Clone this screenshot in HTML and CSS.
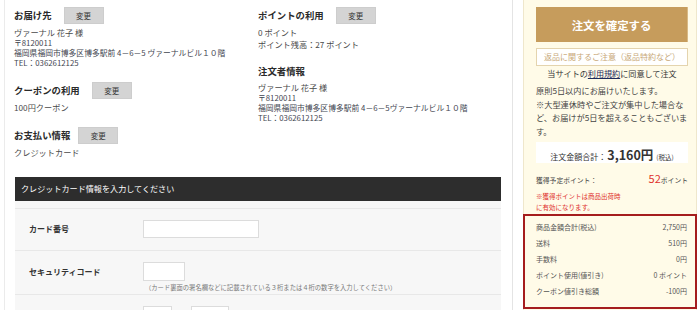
FILE: index.html
```html
<!DOCTYPE html>
<html lang="ja">
<head>
  <meta charset="UTF-8" />
  <title>ご注文内容の確認</title>
  <link rel="stylesheet" href="styles.css">
</head>
<body>
  <div class="page">
    <main class="main">
      <div class="summary">
        <div class="col">
          <section class="info">
            <div class="info-head">
              <h2>お届け先</h2>
              <button class="btn-change">変更</button>
            </div>
            <p class="text">ヴァーナル 花子 様</p>
            <p class="addr">〒8120011</p>
            <p class="addr">福岡県福岡市博多区博多駅前 4－6－5 ヴァーナルビル１０階</p>
            <p class="addr">TEL：0362612125</p>
          </section>

          <section class="info">
            <div class="info-head">
              <h2>クーポンの利用</h2>
              <button class="btn-change">変更</button>
            </div>
            <p class="text">100円クーポン</p>
          </section>

          <section class="info">
            <div class="info-head">
              <h2>お支払い情報</h2>
              <button class="btn-change btn-change--near">変更</button>
            </div>
            <p class="text">クレジットカード</p>
          </section>
        </div>

        <div class="col">
          <section class="info">
            <div class="info-head">
              <h2>ポイントの利用</h2>
              <button class="btn-change">変更</button>
            </div>
            <p class="text">0 ポイント</p>
            <p class="text">ポイント残高：27 ポイント</p>
          </section>

          <section class="info">
            <div class="info-head">
              <h2>注文者情報</h2>
            </div>
            <p class="text">ヴァーナル 花子 様</p>
            <p class="addr">〒8120011</p>
            <p class="addr">福岡県福岡市博多区博多駅前 4－6－5ヴァーナルビル１０階</p>
            <p class="addr">TEL：0362612125</p>
          </section>
        </div>
      </div>

      <section class="card-form">
        <h3 class="card-head">クレジットカード情報を入力してください</h3>
        <div class="card-body">
          <div class="card-gap"></div>

          <div class="card-row">
            <div class="card-label">カード番号</div>
            <div class="card-field">
              <input class="inp inp-number" type="text" />
            </div>
          </div>

          <div class="card-row card-row--note">
            <div class="card-label card-label--tall">セキュリティコード</div>
            <div class="card-field">
              <input class="inp inp-code" type="text" />
              <p class="card-note">（カード裏面の署名欄などに記載されている３桁または４桁の数字を入力してください）</p>
            </div>
          </div>

          <div class="card-row">
            <div class="card-label"></div>
            <div class="card-field card-field--split">
              <input class="inp inp-month" type="text" />
              <input class="inp inp-year" type="text" />
            </div>
          </div>
        </div>
      </section>
    </main>

    <aside class="side">
      <div class="side-inner">
        <button class="btn-confirm">注文を確定する</button>
        <a class="return-link" href="#">返品に関するご注意（返品特約など）</a>
        <p class="agree">当サイトの<a href="#">利用規約</a>に同意して注文</p>
        <p class="notice">原則5日以内にお届けいたします。<br>※大型連休時やご注文が集中した場合など、お届けが5日を超えることもございます。</p>

        <div class="total">
          <span class="total-label">注文金額合計：</span>
          <span class="total-value">3,160円</span>
          <span class="total-tax">(税込)</span>
        </div>

        <div class="points">
          <span class="points-label">獲得予定ポイント：</span>
          <span class="points-value"><em>52</em>ポイント</span>
        </div>
        <p class="points-note">※獲得ポイントは商品出荷時<br>に有効になります。</p>
      </div>

      <div class="price-box">
        <div class="price-row"><span>商品金額合計(税込)</span><span>2,750円</span></div>
        <div class="price-row"><span>送料</span><span>510円</span></div>
        <div class="price-row"><span>手数料</span><span>0円</span></div>
        <div class="price-row"><span>ポイント使用(値引き)</span><span>0 ポイント</span></div>
        <div class="price-row"><span>クーポン値引き総額</span><span>-100円</span></div>
      </div>
    </aside>
  </div>
</body>
</html>
```

FILE: styles.css
```css
* {
  margin: 0;
  padding: 0;
  box-sizing: border-box;
}

body {
  background: #ffffff;
  color: #444444;
  font-family: "Noto Sans CJK JP", "Noto Sans", sans-serif;
  overflow: hidden;
}

.page {
  display: flex;
  gap: 10px;
  padding-left: 4px;
  height: 310px;
  overflow: hidden;
}

/* left column */
.main {
  width: 509px;
  height: 340px;
  border-left: 1px solid #ebebeb;
  border-right: 1px solid #e4e4e4;
  padding: 7px 11px 0 9px;
}

.summary {
  display: grid;
  grid-template-columns: 244px 1fr;
}

.col {
  display: flex;
  flex-direction: column;
  gap: 14px;
}

.info-head {
  display: flex;
  align-items: center;
  margin-bottom: 2px;
}

.info-head h2 {
  font-size: 9.4px;
  line-height: 15px;
  font-weight: bold;
  color: #2a2a2a;
}

.btn-change {
  margin-left: 12px;
  width: 40px;
  height: 17px;
  background: #d4d4d4;
  border: 1px solid #cdcdcd;
  color: #333333;
  font-family: inherit;
  font-size: 7.5px;
  cursor: pointer;
}

.btn-change--near {
  margin-left: 8px;
}

.text {
  font-size: 8.2px;
  line-height: 12px;
  color: #4a4a4a;
}

.addr {
  font-size: 7.8px;
  line-height: 10px;
  color: #3f4550;
}

/* credit card form */
.card-form {
  margin: 19px 0 0 1px;
}

.card-head {
  background: #2d2d2d;
  color: #ffffff;
  font-size: 8.1px;
  font-weight: normal;
  height: 24px;
  line-height: 24px;
  padding-left: 6px;
}

.card-body {
  background: #f7f7f7;
}

.card-gap {
  height: 8px;
  border-bottom: 1px solid #e8e8e8;
}

.card-row {
  display: grid;
  grid-template-columns: 128px 1fr;
  align-items: start;
  padding: 11px 0 12px;
  border-bottom: 1px solid #e8e8e8;
}

.card-row--note {
  padding-bottom: 2px;
}

.card-label {
  padding-left: 14px;
  font-size: 8px;
  line-height: 18px;
  font-weight: bold;
  color: #333333;
}

.card-label--tall {
  line-height: 19px;
}

.card-field--split {
  display: flex;
  gap: 19px;
}

.inp {
  display: block;
  background: #ffffff;
  border: 1px solid #dcdcdc;
  height: 18px;
}

.inp-number {
  width: 116px;
}

.inp-code {
  width: 42px;
  height: 19px;
}

.inp-month {
  width: 29px;
}

.inp-year {
  width: 38px;
}

.card-note {
  margin-top: 2px;
  padding-left: 2px;
  font-size: 6.3px;
  line-height: 9px;
  color: #777777;
}

/* right column */
.side {
  width: 174px;
  height: 340px;
  background: #fffbe8;
  border-left: 1px solid #efe7cc;
  border-right: 1px solid #efe7cc;
}

.side-inner {
  padding: 7px 8px 0 12px;
}

.btn-confirm {
  display: block;
  width: 100%;
  height: 35px;
  background: #c69c5c;
  border: none;
  border-right: 1px solid #d8b985;
  color: #ffffff;
  font-family: inherit;
  font-size: 11.4px;
  font-weight: bold;
  cursor: pointer;
}

.return-link {
  display: block;
  margin-top: 6px;
  height: 18px;
  border: 1px solid #e4d4ae;
  background: #ffffff;
  color: #c8a878;
  font-size: 8px;
  line-height: 16px;
  text-align: center;
  text-decoration: none;
}

.agree {
  margin-top: 1px;
  text-align: center;
  font-size: 8.1px;
  line-height: 14px;
  color: #333333;
}

.agree a {
  color: #1d2a5c;
  text-decoration: underline;
}

.notice {
  margin-top: 3px;
  font-size: 8.2px;
  line-height: 13.5px;
  color: #444444;
}

.total {
  margin-top: 4px;
  height: 21px;
  background: #ffffff;
  display: flex;
  align-items: baseline;
  justify-content: center;
  padding-top: 3px;
  color: #333333;
}

.total-label {
  font-size: 8px;
}

.total-value {
  font-size: 12.5px;
  font-weight: bold;
  margin-left: 1px;
}

.total-tax {
  font-size: 6.5px;
  margin-left: 3px;
}

.points {
  margin-top: 6px;
  display: flex;
  justify-content: space-between;
  align-items: baseline;
  color: #444444;
}

.points-label {
  font-size: 6.8px;
  line-height: 14px;
}

.points-value {
  font-size: 6.8px;
  line-height: 14px;
  padding-top: 2px;
}

.points-value em {
  font-style: normal;
  font-size: 11px;
  color: #e0312c;
}

.points-note {
  margin-top: 4px;
  font-size: 6.5px;
  line-height: 10.5px;
  color: #e0312c;
}

.price-box {
  margin: 2px -1px 0;
  border: 2px solid #a51d1d;
  padding: 3px 8px 8px 11px;
}

.price-row {
  display: flex;
  justify-content: space-between;
  font-size: 7px;
  line-height: 16px;
  color: #555555;
}
```
